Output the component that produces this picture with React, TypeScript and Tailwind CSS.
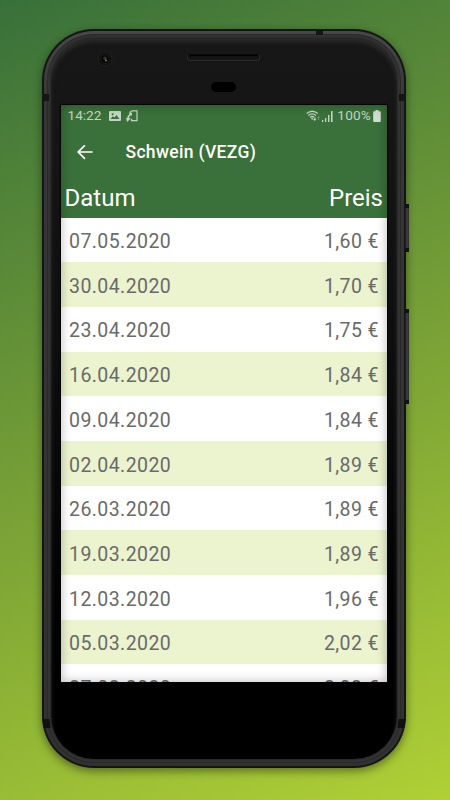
const rows: [string, string][] = [
  ["07.05.2020", "1,60 €"],
  ["30.04.2020", "1,70 €"],
  ["23.04.2020", "1,75 €"],
  ["16.04.2020", "1,84 €"],
  ["09.04.2020", "1,84 €"],
  ["02.04.2020", "1,89 €"],
  ["26.03.2020", "1,89 €"],
  ["19.03.2020", "1,89 €"],
  ["12.03.2020", "1,96 €"],
  ["05.03.2020", "2,02 €"],
  ["27.02.2020", "2,02 €"],
];

function StatusBar() {
  return (
    <div className="flex h-[22px] items-center pr-[6px] pl-[7px] text-[13.6px] leading-none text-[#c3d4c3]">
      <span className="w-[41px]">14:22</span>
      <svg className="h-[10px] w-[12px]" viewBox="0 0 12 10">
        <path fill="#c3d4c3" fillRule="evenodd" d="M1 0H11Q12 0 12 1V9Q12 10 11 10H1Q0 10 0 9V1Q0 0 1 0ZM1.5 8H10.5L7.5 4L5.5 6.5L3.8 5.2Z" />
        <circle cx="3.7" cy="3.2" r="1" fill="#3a7039" />
      </svg>
      <svg className="ml-[5px] h-[12px] w-[12px]" viewBox="0 0 12 12" fill="none" stroke="#c3d4c3" strokeWidth="1.2">
        <path d="M4.2 4V2L6 .8H11V10.7H5.5V8.7" />
        <path d="M5.4 3.4L2.3 6.6V9.5" strokeWidth="1.6" />
        <path fill="#c3d4c3" stroke="none" d="M0 7.8L4.8 8.2L1.2 12ZM2.7 2.8H6V6Z" />
      </svg>
      <div className="ml-auto flex items-center">
        <svg className="h-[12px] w-[15px]" viewBox="0 0 15 12" fill="none" stroke="#c3d4c3" strokeWidth="1.3">
          <path d="M.7 3.6Q6.2-1.1 11.8 3.6M2.3 5.5Q6.2 2.3 10 5.5M4.1 7.3Q6.2 5.7 8.1 7.3" />
          <path fill="#c3d4c3" stroke="none" d="M5 8.5Q6.2 7.7 7.3 8.5L6.2 10ZM7.1 9H8.3V7.2H9.4V9H10.4L8.8 11Z" />
          <path fill="#c3d4c3" stroke="none" opacity=".4" d="M12.5 6L14 8H13V10H12V8H11Z" />
        </svg>
        <svg className="ml-[1px] h-[11px] w-[11px]" viewBox="0 0 11 11" fill="#c3d4c3">
          <path d="M0 9H1.3V11H0ZM3 7H4.3V11H3ZM6 4H7.4V11H6ZM9 0H10.6V11H9Z" />
        </svg>
        <span className="ml-[4px] tracking-[0.2px]">100%</span>
        <svg className="ml-[2px] h-[12px] w-[8px]" viewBox="0 0 8 12" fill="#d0ddd0">
          <path d="M2.5 0H5.5V1.2H7.2Q7.8 1.2 7.8 2V11Q7.8 12 7 12H1Q.2 12 .2 11V2Q.2 1.2 1 1.2H2.5Z" />
        </svg>
      </div>
    </div>
  );
}

function Screen() {
  return (
    <div className="relative mx-auto h-[576.5px] w-[326.5px] bg-white shadow-[0_0_1px_1px_#050505]">
      <div className="flex h-full flex-col overflow-hidden">
        <div className="h-[112.5px] shrink-0 bg-[#3a7039]">
          <StatusBar />
          <div className="flex h-[51px] items-center pl-[16.5px] text-white">
            <svg className="h-4 w-4" viewBox="0 0 16 16" fill="none" stroke="white" strokeWidth="1.7">
              <path d="M15.6 7H1.6M8 .2L1.2 7L8 13.8" />
            </svg>
            <h1 className="ml-[32.5px] text-[17.5px] leading-none font-medium tracking-[0.32px]">Schwein (VEZG)</h1>
          </div>
          <div className="flex h-[39.5px] items-center justify-between px-[4px] text-[24px] leading-none text-white">
            <span>Datum</span>
            <span>Preis</span>
          </div>
        </div>
        {rows.map(([date, price]) => (
          <div
            key={date}
            className="flex h-[44.7px] shrink-0 items-center justify-between pt-[4px] pr-[8px] pl-[8.5px] text-[19.5px] leading-none tracking-[0.42px] text-[#6a6a6a] odd:bg-[#ebf3cf]"
          >
            <span>{date}</span>
            <span>{price}</span>
          </div>
        ))}
      </div>
      <div className="pointer-events-none absolute inset-0 shadow-[inset_0_0_11px_rgba(0,0,0,0.28)]" />
    </div>
  );
}

export default function App() {
  return (
    <main className="h-[800px] w-[450px] overflow-hidden bg-[linear-gradient(156deg,#38703a_0%,#769f36_50%,#b0d035_100%)] pt-[29px] pl-[42px] font-[Roboto,sans-serif]">
      <div className="relative h-[739px] w-[363.5px] rounded-[52px] bg-[#151517] p-[2px] shadow-[0_3px_10px_rgba(0,0,0,0.45)]">
        <div className="absolute top-[175px] -right-[3px] h-[48px] w-[4px] border-y-[4px] border-[#121212] bg-[linear-gradient(90deg,#171717,#404040,#2c2c2c)]" />
        <div className="absolute top-[280px] -right-[3px] h-[95px] w-[4px] border-y-[4px] border-[#121212] bg-[linear-gradient(90deg,#171717,#404040,#2c2c2c)]" />
        <div className="h-full rounded-[50px] bg-[linear-gradient(180deg,#484848,#363636_10%,#313131)] p-[3px]">
          <div className="h-full rounded-[47px] bg-[#292929] p-px">
            <div className="h-full rounded-[46px] bg-[#333] p-[3px]">
              <div className="h-full rounded-[43px] bg-[linear-gradient(180deg,#171717_0%,#151515_15%,#0b0b0b_50%,#000_85%)] shadow-[0_0_2px_#1a1a1a,inset_0_4px_4px_#2b2b2b]">
                <div className="flex h-[67px] flex-col items-center pt-[16px] pr-[1px]">
                  <div className="h-[6.5px] w-[73px] rounded-full border border-[#2b2b2b] border-t-[#080808] bg-[#151515] shadow-[inset_0_1px_1px_#000]" />
                  <div className="mt-[21px] h-[10px] w-[25px] rounded-full bg-black" />
                </div>
                <Screen />
              </div>
            </div>
          </div>
        </div>
        <svg className="absolute top-[22px] left-[55px] h-[16px] w-[16px]" viewBox="0 0 16 16">
          <circle cx="8" cy="8" r="7" fill="#101010" stroke="#1f1f1f" />
          <circle cx="8" cy="8" r="4.3" fill="#050505" stroke="#1c1c1c" />
          <circle cx="8" cy="7.3" r="1.8" fill="#35353a" />
          <circle cx="9" cy="9.5" r="1" fill="#888735" />
        </svg>
        <div className="absolute top-0 left-[274px] h-[6px] w-[7px] bg-[#151515]" />
        <div className="absolute top-[65px] left-0 h-[7px] w-[7px] bg-[#151515]" />
        <div className="absolute top-[65px] right-0 h-[7px] w-[7px] bg-[#151515]" />
        <div className="absolute bottom-[40px] left-[1px] h-[9px] w-[7px] skew-x-[8deg] bg-[#111]" />
        <div className="absolute right-[1px] bottom-[40px] h-[9px] w-[7px] -skew-x-[8deg] bg-[#111]" />
      </div>
    </main>
  );
}
